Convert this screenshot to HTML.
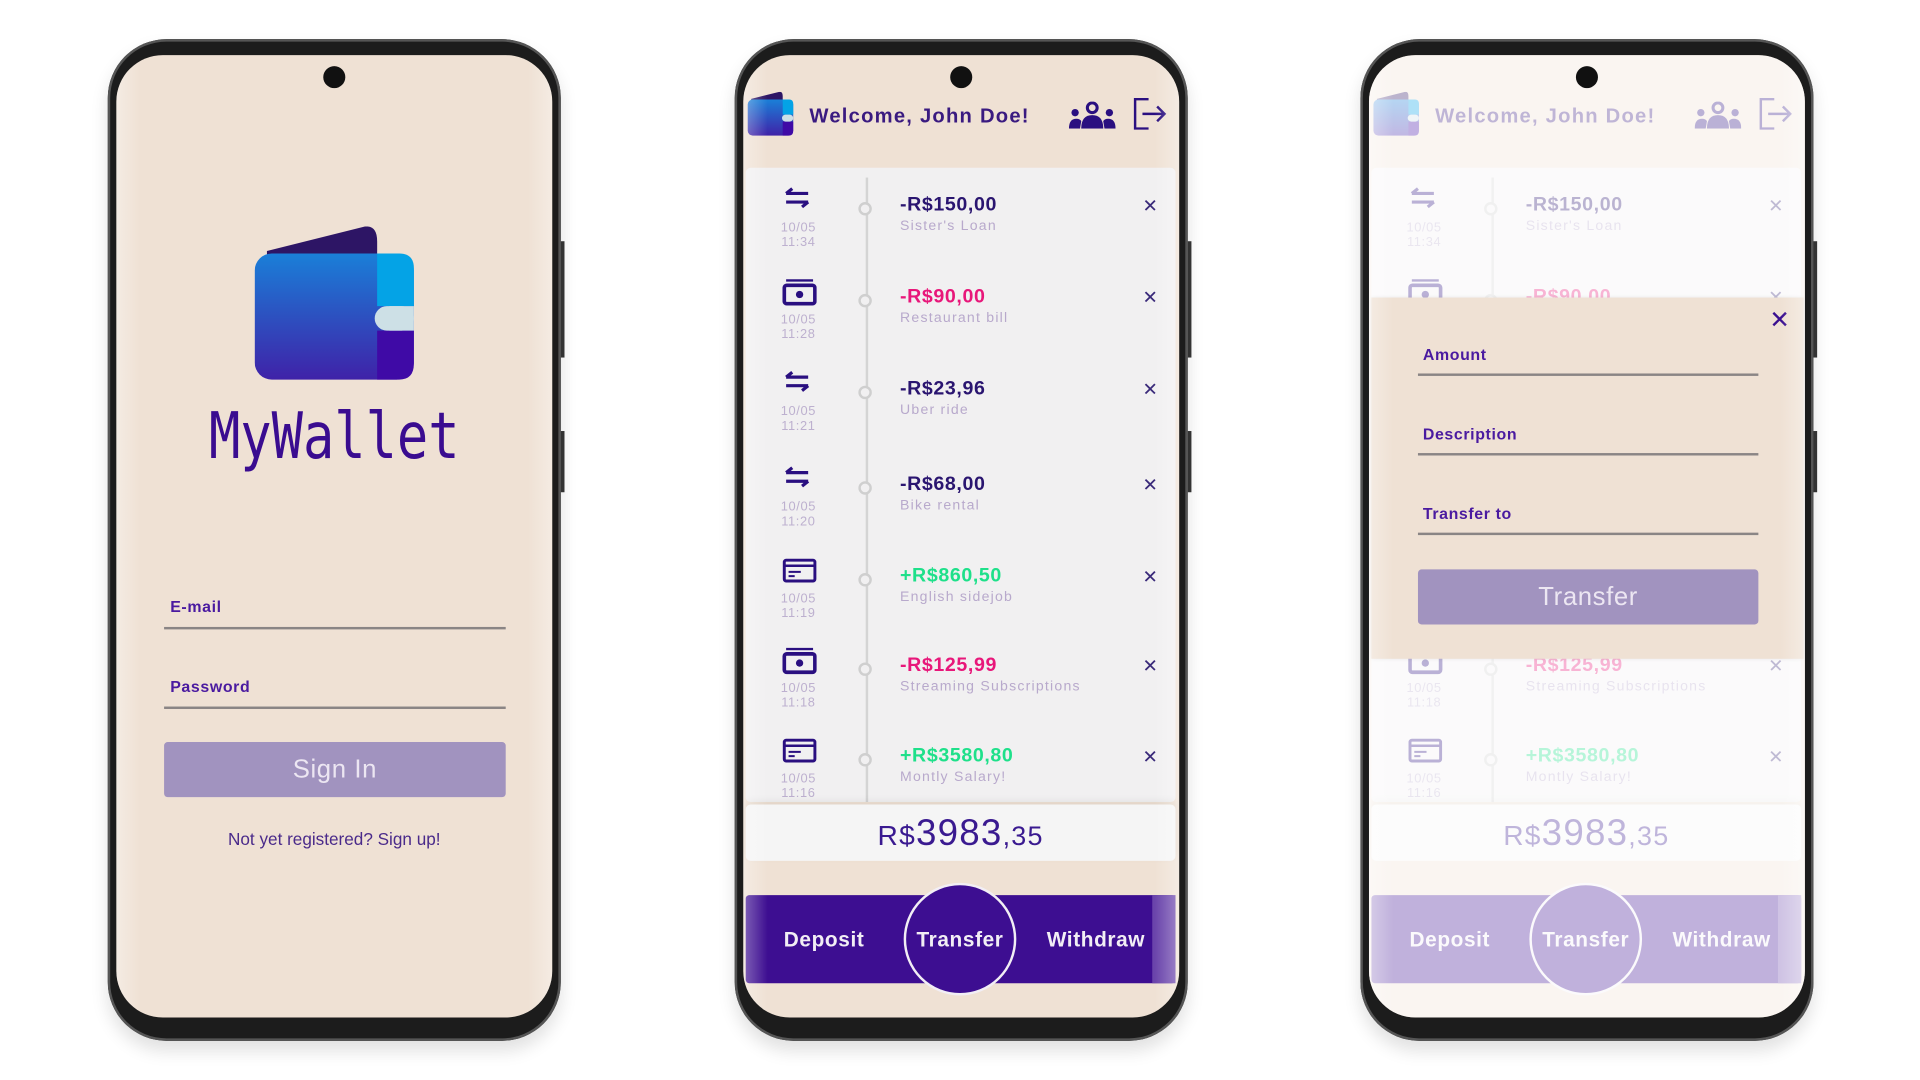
<!DOCTYPE html>
<html><head><meta charset="utf-8"><style>
*{margin:0;padding:0;box-sizing:border-box}
html,body{width:1920px;height:1080px;overflow:hidden;background:#fff;font-family:"Liberation Sans","DejaVu Sans",sans-serif}
#w{position:absolute;left:0;top:0;width:1568px;height:882px;transform:scale(1.22449);transform-origin:0 0}
.ph{position:absolute;top:32px;width:370px;height:818px;background:#1c1c1c;border-radius:48px;box-shadow:0 8px 14px rgba(0,0,0,.12),inset 0 0 0 2px #555}
.scr{position:absolute;left:7px;top:13px;width:356px;height:786px;background:#efe1d4;border-radius:38px;overflow:hidden}
.scr:before,.scr:after{content:"";position:absolute;top:0;bottom:0;width:20px;background:linear-gradient(90deg,rgba(255,255,255,.35),rgba(255,255,255,0));z-index:5}
.scr:before{left:0}.scr:after{right:0;transform:scaleX(-1)}
.cam{position:absolute;left:169px;top:9px;width:18px;height:18px;border-radius:50%;background:#111;z-index:9}
.btnside{position:absolute;right:-3px;width:3px;background:#333}
.a{position:absolute}
.lbl{position:absolute;font-size:13px;font-weight:bold;color:#4a1aa0;letter-spacing:.5px}
.ln{position:absolute;height:2px;background:#8a8585}
.pbtn{position:absolute;background:#a193bf;border-radius:3px;color:#ece6f2;font-size:21px;text-align:center;letter-spacing:.5px}
.row .amt{position:absolute;left:128px;font-size:16px;font-weight:bold;letter-spacing:.5px}
.row .ds{position:absolute;left:128px;font-size:11.5px;color:#b8a9cc;letter-spacing:1px}
.row .dt{position:absolute;left:22px;width:46px;text-align:center;font-size:10.5px;color:#bdb0cf;letter-spacing:.5px;line-height:12px}
.row .dot{position:absolute;left:94px;width:11px;height:11px;border-radius:50%;border:2px solid #cfcfcf;background:#f1f0f1}
.row .x{position:absolute;left:326px;font-size:15px;color:#3a2a7a;font-weight:bold}
</style></head><body><div id="w">

<!-- PHONE 1 -->
<div class="ph" style="left:88px"><div class="btnside" style="top:165px;height:95px"></div><div class="btnside" style="top:320px;height:50px"></div>
<div class="scr"><div class="cam"></div>
<svg class="a" style="left:113px;top:140px" width="132" height="126" viewBox="0 0 132 126">
<defs><linearGradient id="g1" x1="0" y1="0" x2="0" y2="1"><stop offset="0" stop-color="#1a7fd8"/><stop offset="1" stop-color="#3f22a8"/></linearGradient></defs>
<path d="M10 20 L90 0 Q100 -1 100 12 V40 H10 Z" fill="#2d1565"/>
<rect x="0" y="22" width="130" height="103" rx="14" fill="url(#g1)"/>
<path d="M100 22 H118 Q130 22 130 34 V65 H100 Z" fill="#04a3e6"/>
<path d="M100 85 H130 V112 Q130 125 118 125 H100 Z" fill="#3f0aa6"/>
<rect x="98" y="65" width="32" height="20" rx="10" fill="#cde0e6"/>
<rect x="110" y="65" width="20" height="20" fill="#cde0e6"/>
</svg>
<div class="a" style="left:0;width:356px;top:282px;text-align:center;font-family:'DejaVu Sans Mono','Liberation Mono',monospace;font-size:50px;color:#3a0c90;transform:scale(.85,1.05)">MyWallet</div>
<div class="lbl" style="left:44px;top:443px">E-mail</div><div class="ln" style="left:39px;top:467px;width:279px"></div>
<div class="lbl" style="left:44px;top:508px">Password</div><div class="ln" style="left:39px;top:532px;width:279px"></div>
<div class="pbtn" style="left:39px;top:561px;width:279px;height:45px;line-height:45px">Sign In</div>
<div class="a" style="left:0;width:356px;top:632px;text-align:center;font-size:14px;color:#4a2a8a">Not yet registered? Sign up!</div>
</div></div>

<!-- PHONE 2 -->
<div class="ph" style="left:600px"><div class="btnside" style="top:165px;height:95px"></div><div class="btnside" style="top:320px;height:50px"></div>
<div class="scr" id="s2"><div class="cam"></div>
<svg class="a" style="left:3px;top:30px" width="39" height="36" viewBox="0 0 132 126"><defs><linearGradient id="g2" x1="0" y1="0" x2="0" y2="1"><stop offset="0" stop-color="#1a7fd8"/><stop offset="1" stop-color="#3f22a8"/></linearGradient></defs><path d="M10 20 L90 0 Q100 -1 100 12 V40 H10 Z" fill="#2d1565"/><rect x="0" y="22" width="130" height="103" rx="14" fill="url(#g2)"/><path d="M100 22 H118 Q130 22 130 34 V65 H100 Z" fill="#04a3e6"/><path d="M100 85 H130 V112 Q130 125 118 125 H100 Z" fill="#3f0aa6"/><rect x="98" y="65" width="32" height="20" rx="10" fill="#cde0e6"/></svg>
<div class="a" style="left:54px;top:41px;font-size:16.5px;font-weight:bold;color:#3a1a80;letter-spacing:1px">Welcome, John Doe!</div>
<svg class="a" style="left:266px;top:38px" width="38" height="22" viewBox="0 0 38 22" fill="#2a0f80"><circle cx="19" cy="5" r="4" fill="none" stroke="#2a0f80" stroke-width="2.5"/><path d="M10 22 Q10 11 19 11 Q28 11 28 22Z"/><circle cx="5" cy="9" r="3"/><path d="M0 22 Q0 14 6 14 Q9 14 10 16 L9 22Z"/><circle cx="33" cy="9" r="3"/><path d="M38 22 Q38 14 32 14 Q29 14 28 16 L29 22Z"/></svg>
<svg class="a" style="left:318px;top:35px" width="28" height="26" viewBox="0 0 28 26" fill="none" stroke="#2a0f80" stroke-width="2"><path d="M13 1 H2 V25 H13"/><path d="M8 13 H26 M20 7 L26 13 L20 19"/></svg>
<div class="a" style="left:2px;top:92px;width:351px;height:518px;background:#f1f0f1;border-radius:4px"></div>
<div class="a" style="left:100px;top:100px;width:2px;height:510px;background:#d4d4d4"></div>
<div id="rows"></div>
<div class="a" style="left:2px;top:612px;width:351px;height:46px;background:#f5f5f5;border-radius:4px;box-shadow:0 -3px 6px rgba(0,0,0,.06);text-align:center;color:#3a1a90;letter-spacing:1px;line-height:48px"><span style="font-size:23px">R$</span><span style="font-size:30px">3983</span><span style="font-size:22px">,35</span></div>
<div class="a" style="left:2px;top:686px;width:351px;height:72px;background:#3d0e91;border-radius:3px"></div>
<div class="a" style="left:334px;top:686px;width:19px;height:72px;background:#6a44ab"></div>
<div class="a" style="left:131px;top:676px;width:92px;height:92px;border-radius:50%;background:#3d0e91;border:2.5px solid #f2eef5"></div>
<div class="a" style="left:16px;top:713px;width:100px;text-align:center;color:#f2eef5;font-size:17px;font-weight:bold;letter-spacing:.5px">Deposit</div>
<div class="a" style="left:127px;top:713px;width:100px;text-align:center;color:#f2eef5;font-size:17px;font-weight:bold;letter-spacing:.5px">Transfer</div>
<div class="a" style="left:238px;top:713px;width:100px;text-align:center;color:#f2eef5;font-size:17px;font-weight:bold;letter-spacing:.5px">Withdraw</div>
</div></div>

<!-- PHONE 3 -->
<div class="ph" style="left:1111px"><div class="btnside" style="top:165px;height:95px"></div><div class="btnside" style="top:320px;height:50px"></div>
<div class="scr" id="s3"></div></div>

</div>
<script>
var rows=[["-R$150,00","Sister's Loan","10/05","11:34","#2a1570","t"],["-R$90,00","Restaurant bill","10/05","11:28","#e8177a","m"],["-R$23,96","Uber ride","10/05","11:21","#2a1570","t"],["-R$68,00","Bike rental","10/05","11:20","#2a1570","t"],["+R$860,50","English sidejob","10/05","11:19","#1ee08a","c"],["-R$125,99","Streaming Subscriptions","10/05","11:18","#e8177a","m"],["+R$3580,80","Montly Salary!","10/05","11:16","#1ee08a","c"]];
var ys=[110,185,260,338,413,486,560],h="";
var ic={t:'<svg width="24" height="18" viewBox="0 0 24 18" fill="none" stroke="#2a0f80" stroke-width="2.6"><path d="M21 5 H3 M8 1 L3 5"/><path d="M3 12 H21 M16 16 L21 12"/></svg>',
m:'<svg width="28" height="22" viewBox="0 0 28 22"><rect x="3" y="0" width="22" height="2" fill="#2a0f80"/><rect x="1.5" y="5" width="25" height="15" rx="2" fill="none" stroke="#2a0f80" stroke-width="3"/><circle cx="14" cy="12.5" r="3" fill="#2a0f80"/></svg>',
c:'<svg width="28" height="20" viewBox="0 0 28 20" fill="none" stroke="#2a0f80" stroke-width="2.4"><rect x="1.5" y="1.5" width="25" height="17" rx="1.5"/><path d="M2 6 H26" stroke-width="2"/><path d="M5 11 H15 M5 14.5 H10" stroke-width="1.6"/></svg>'};
rows.forEach(function(r,i){var y=ys[i];h+='<div class="row"><div style="position:absolute;left:32px;top:'+(y-2)+'px">'+ic[r[5]]+'</div><div class="dt" style="top:'+(y+25)+'px">'+r[2]+'<br>'+r[3]+'</div><div class="dot" style="top:'+(y+10)+'px"></div><div class="amt" style="top:'+(y+4)+'px;color:'+r[4]+'">'+r[0]+'</div><div class="ds" style="top:'+(y+24)+'px">'+r[1]+'</div><div class="x" style="top:'+(y+4)+'px">✕</div></div>'});
document.getElementById('rows').outerHTML=h;
var s3=document.getElementById('s3');s3.innerHTML=document.getElementById('s2').innerHTML.replace(/g2/g,'g3')+
'<div style="position:absolute;left:0;top:0;width:100%;height:100%;background:rgba(255,255,255,.68);z-index:3"></div>'+
'<div style="position:absolute;left:2px;top:198px;width:353px;height:295px;background:#efe1d4;z-index:4;box-shadow:0 0 3px rgba(0,0,0,.08)">'+
'<div style="position:absolute;left:325px;top:6px;font-size:20px;color:#3a0f90;font-weight:bold">✕</div>'+
'<div class="lbl" style="left:42px;top:39px">Amount</div><div class="ln" style="left:38px;top:62px;width:278px"></div>'+
'<div class="lbl" style="left:42px;top:104px">Description</div><div class="ln" style="left:38px;top:127px;width:278px"></div>'+
'<div class="lbl" style="left:42px;top:169px">Transfer to</div><div class="ln" style="left:38px;top:192px;width:278px"></div>'+
'<div class="pbtn" style="left:38px;top:222px;width:278px;height:45px;line-height:45px">Transfer</div></div>';
</script>
</body></html>
